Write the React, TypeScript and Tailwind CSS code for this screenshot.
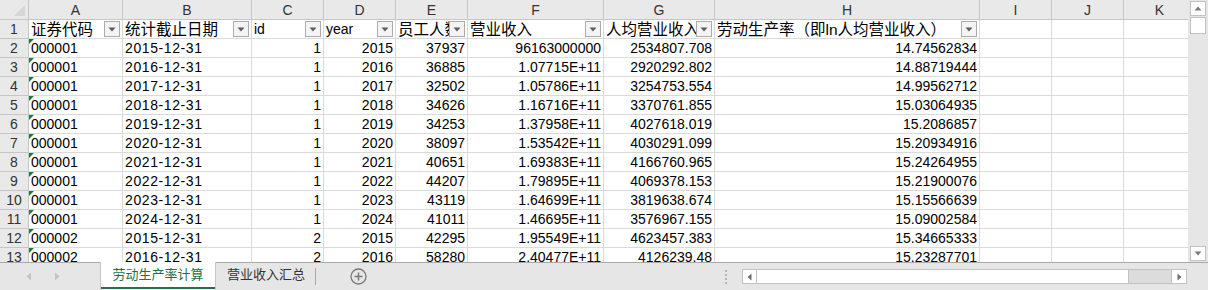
import React from "react";

const FONT = { fontFamily: '"Liberation Sans", Arial, "Noto Sans CJK SC", sans-serif' };

type Row = [string, string, string, string, string, string, string, string];

const rows: Row[] = [
  ["000001", "2015-12-31", "1", "2015", "37937", "96163000000", "2534807.708", "14.74562834"],
  ["000001", "2016-12-31", "1", "2016", "36885", "1.07715E+11", "2920292.802", "14.88719444"],
  ["000001", "2017-12-31", "1", "2017", "32502", "1.05786E+11", "3254753.554", "14.99562712"],
  ["000001", "2018-12-31", "1", "2018", "34626", "1.16716E+11", "3370761.855", "15.03064935"],
  ["000001", "2019-12-31", "1", "2019", "34253", "1.37958E+11", "4027618.019", "15.2086857"],
  ["000001", "2020-12-31", "1", "2020", "38097", "1.53542E+11", "4030291.099", "15.20934916"],
  ["000001", "2021-12-31", "1", "2021", "40651", "1.69383E+11", "4166760.965", "15.24264955"],
  ["000001", "2022-12-31", "1", "2022", "44207", "1.79895E+11", "4069378.153", "15.21900076"],
  ["000001", "2023-12-31", "1", "2023", "43119", "1.64699E+11", "3819638.674", "15.15566639"],
  ["000001", "2024-12-31", "1", "2024", "41011", "1.46695E+11", "3576967.155", "15.09002584"],
  ["000002", "2015-12-31", "2", "2015", "42295", "1.95549E+11", "4623457.383", "15.34665333"],
  ["000002", "2016-12-31", "2", "2016", "58280", "2.40477E+11", "4126239.48", "15.23287701"],
];

const letters = ["A", "B", "C", "D", "E", "F", "G", "H", "I", "J", "K"];
const headers = ["证券代码", "统计截止日期", "id", "year", "员工人数", "营业收入", "人均营业收入", "劳动生产率（即ln人均营业收入）"];

function FilterBtn() {
  return (
    <div className="absolute right-[2px] top-[1px] w-[16px] h-[16px] border border-[#ababab] bg-[#f4f4f4] flex items-center justify-center">
      <svg width="8" height="5" viewBox="0 0 8 5">
        <path d="M0.5 0.5 L7.5 0.5 L4 4.5 Z" fill="#5c5c5c" />
      </svg>
    </div>
  );
}

const cellBase = "relative h-[19px] border-r border-b border-[#dadada] overflow-hidden whitespace-nowrap leading-[19px] text-[14px] text-black";
const rowHead = "h-[19px] border-r border-b border-[#c6c6c6] bg-[#e9e9e9] text-center leading-[19px] text-[14px] text-[#333]";

export default function App() {
  return (
    <div className="w-[1208px] h-[290px] bg-white overflow-hidden flex flex-col" style={FONT}>
      <div className="flex h-[262px] shrink-0 overflow-hidden">
        <div className="w-[1188px] shrink-0 overflow-hidden">
          <div className="grid grid-cols-[29px_94px_129px_72px_72px_72px_136px_111px_265px_72px_72px_72px]">
            <div className="relative h-[20px] bg-[#e9e9e9] border-r border-b border-[#c6c6c6]">
              <svg className="absolute right-[3px] bottom-[3px]" width="11" height="11" viewBox="0 0 11 11">
                <path d="M11 0 L11 11 L0 11 Z" fill="#d6d6d6" />
              </svg>
            </div>
            {letters.map((l) => (
              <div key={l} className="h-[20px] bg-[#e9e9e9] border-r border-b border-[#c6c6c6] text-center text-[14px] leading-[20px] text-[#333]">
                {l}
              </div>
            ))}
            <div className={rowHead}>1</div>
            {headers.map((h, i) => (
              <div key={h} className={`${cellBase} pl-[2px]`}>
                <span className={i === 2 || i === 3 ? "text-[14px]" : "text-[15.5px]"}>{h}</span>
                <FilterBtn />
              </div>
            ))}
            <div className={cellBase}></div>
            <div className={cellBase}></div>
            <div className={cellBase}></div>
            {rows.map((r, ri) => (
              <React.Fragment key={ri}>
                <div className={rowHead}>{ri + 2}</div>
                <div className={`${cellBase} pl-[2px]`}>
                  <div className="absolute left-0 top-0 w-0 h-0 border-t-[5px] border-r-[5px] border-t-[#1e7a3c] border-r-transparent" />
                  {r[0]}
                </div>
                <div className={`${cellBase} pl-[2px] tracking-[0.6px]`}>{r[1]}</div>
                {r.slice(2).map((v, ci) => (
                  <div key={ci} className={`${cellBase} text-right pr-[2px]`}>
                    {v}
                  </div>
                ))}
                <div className={cellBase}></div>
                <div className={cellBase}></div>
                <div className={cellBase}></div>
              </React.Fragment>
            ))}
          </div>
        </div>
        <div className="w-[20px] shrink-0 h-[262px] bg-[#e6e6e6] flex flex-col items-center pt-[1px] pb-[1px]">
          <div className="w-[16px] h-[15px] bg-white border border-[#c2c2c2] flex items-center justify-center">
            <svg width="8" height="5" viewBox="0 0 8 5">
              <path d="M0.5 4.5 L7.5 4.5 L4 0.5 Z" fill="#7a7a7a" />
            </svg>
          </div>
          <div className="w-[16px] h-[17px] mt-[1px] bg-white border border-[#c2c2c2]" />
          <div className="flex-1" />
          <div className="w-[16px] h-[15px] bg-white border border-[#c2c2c2] flex items-center justify-center">
            <svg width="8" height="5" viewBox="0 0 8 5">
              <path d="M0.5 0.5 L7.5 0.5 L4 4.5 Z" fill="#7a7a7a" />
            </svg>
          </div>
        </div>
      </div>
      <div className="h-[28px] shrink-0 bg-[#e6e6e6] border-t border-[#a9a9a9] flex items-stretch">
        <div className="w-[100px] shrink-0 flex items-center">
          <svg className="ml-[26px]" width="6" height="9" viewBox="0 0 6 9">
            <path d="M5 0.5 L5 8.5 L0.5 4.5 Z" fill="#c4c4c4" />
          </svg>
          <svg className="ml-[22px]" width="6" height="9" viewBox="0 0 6 9">
            <path d="M1 0.5 L1 8.5 L5.5 4.5 Z" fill="#c4c4c4" />
          </svg>
        </div>
        <div className="w-[116px] shrink-0 bg-white border-l border-r border-[#c6c6c6] relative flex items-center justify-center -mt-[1px]">
          <span className="text-[13px] text-[#217346] mb-[3px]">劳动生产率计算</span>
          <div className="absolute left-0 right-0 bottom-[1px] h-[2px] bg-[#217346]" />
        </div>
        <div className="w-[100px] shrink-0 flex items-center justify-center relative">
          <span className="text-[13px] text-[#333] mb-[3px]">营业收入汇总</span>
          <div className="absolute right-0 top-[5px] h-[17px] w-px bg-[#a9a9a9]" />
        </div>
        <div className="w-[84px] shrink-0 flex items-center justify-center">
          <svg width="17" height="17" viewBox="0 0 17 17">
            <circle cx="8.5" cy="8.5" r="7.5" fill="none" stroke="#7a7a7a" strokeWidth="1.3" />
            <path d="M8.5 4.5 V12.5 M4.5 8.5 H12.5" stroke="#7a7a7a" strokeWidth="1.5" />
          </svg>
        </div>
        <div className="w-[342px] shrink-0 flex items-center justify-end pr-[15px]">
          <div className="flex flex-col gap-[2px]">
            <div className="w-[2px] h-[2px] bg-[#b4b4b4]" />
            <div className="w-[2px] h-[2px] bg-[#b4b4b4]" />
            <div className="w-[2px] h-[2px] bg-[#b4b4b4]" />
            <div className="w-[2px] h-[2px] bg-[#b4b4b4]" />
          </div>
        </div>
        <div className="w-[445px] shrink-0 flex items-center">
          <div className="w-[445px] h-[15px] flex border border-[#c2c2c2] bg-[#dcdcdc]">
            <div className="w-[14px] bg-white border-r border-[#c2c2c2] flex items-center justify-center">
              <svg width="5" height="8" viewBox="0 0 5 8">
                <path d="M4.5 0.5 L4.5 7.5 L0.5 4 Z" fill="#6f6f6f" />
              </svg>
            </div>
            <div className="w-[372px] bg-white border-r border-[#c2c2c2]" />
            <div className="flex-1" />
            <div className="w-[15px] bg-white border-l border-[#c2c2c2] flex items-center justify-center">
              <svg width="5" height="8" viewBox="0 0 5 8">
                <path d="M0.5 0.5 L0.5 7.5 L4.5 4 Z" fill="#6f6f6f" />
              </svg>
            </div>
          </div>
        </div>
      </div>
    </div>
  );
}
